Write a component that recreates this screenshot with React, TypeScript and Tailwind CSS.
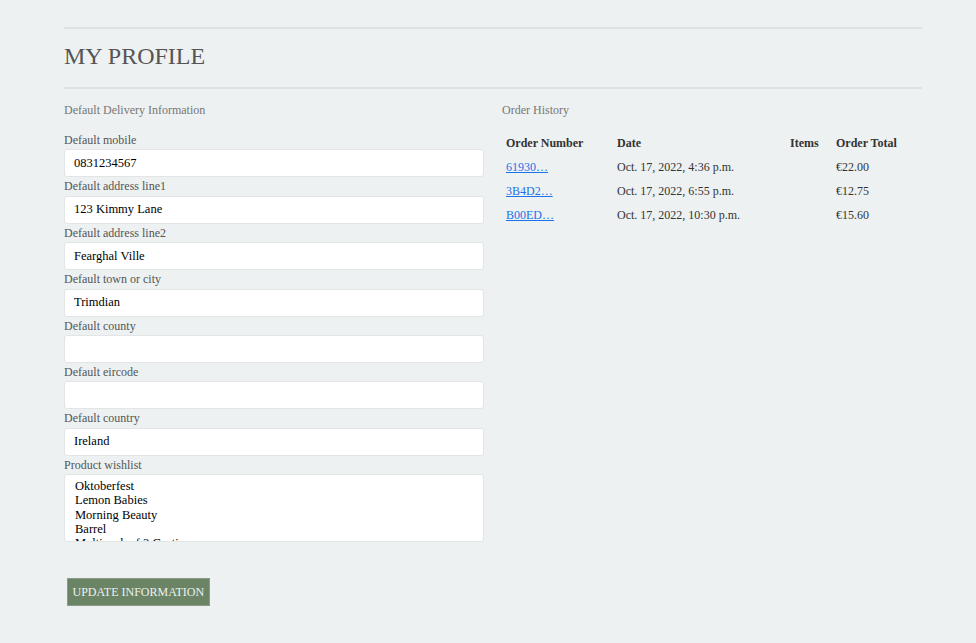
import React from 'react'

const fields = [
  { label: 'Default mobile', value: '0831234567' },
  { label: 'Default address line1', value: '123 Kimmy Lane' },
  { label: 'Default address line2', value: 'Fearghal Ville' },
  { label: 'Default town or city', value: 'Trimdian' },
  { label: 'Default county', value: '' },
  { label: 'Default eircode', value: '' },
  { label: 'Default country', value: 'Ireland' },
]

const wishlist = ['Oktoberfest', 'Lemon Babies', 'Morning Beauty', 'Barrel', 'Multipack of 3 Cacti']

const orders = [
  { number: '61930…', date: 'Oct. 17, 2022, 4:36 p.m.', total: '€22.00' },
  { number: '3B4D2…', date: 'Oct. 17, 2022, 6:55 p.m.', total: '€12.75' },
  { number: 'B00ED…', date: 'Oct. 17, 2022, 10:30 p.m.', total: '€15.60' },
]

const App = () => {
  return (
    <div className="min-h-[643px] bg-[#edf1f1] pl-[64px] pr-[54px] pt-[27px] font-['Liberation_Serif',serif] text-[#555]">
      <div className="border-t-2 border-[#dde2e2]">
        <h2 className="h-[58px] pt-[13px] text-[24px] leading-[28px] text-[#555]">MY PROFILE</h2>
      </div>
      <div className="flex border-t-2 border-[#dde2e2] pt-[12px]">
        <div className="w-[420px]">
          <p className="h-[18px] text-[12px] leading-[18px] text-[#777]">Default Delivery Information</p>
          <div className="mt-[12px] flex flex-col">
            {fields.map((f) => (
              <div key={f.label}>
                <label className="block h-[18.4px] text-[12px] leading-[18px] text-[#555]">{f.label}</label>
                <div className="flex h-[28px] items-center rounded-[3px] border border-[#e1e5e5] bg-white pl-[9px] text-[12.5px] text-black">
                  {f.value}
                </div>
              </div>
            ))}
            <label className="block h-[18.4px] text-[12px] leading-[18px] text-[#555]">Product wishlist</label>
            <div className="h-[68px] overflow-hidden rounded-[3px] border border-[#e1e5e5] bg-white pl-[10px] pt-[4px] text-[12.5px] leading-[14.3px] text-black">
              {wishlist.map((w) => (
                <div key={w}>{w}</div>
              ))}
            </div>
          </div>
          <button className="ml-[3px] mt-[36px] h-[28px] border border-[#8a9c86] bg-[#6b8466] px-[4.5px] text-[12px] text-[#eef1ee]">
            UPDATE INFORMATION
          </button>
        </div>
        <div className="ml-[18px] flex-1">
          <p className="h-[18px] text-[12px] leading-[18px] text-[#777]">Order History</p>
          <table className="mt-[12px] w-full text-left text-[12px] text-[#333]">
            <thead>
              <tr className="h-[24px] font-bold">
                <th className="w-[111px] px-[4px] font-bold">Order Number</th>
                <th className="w-[173px] px-[4px] font-bold">Date</th>
                <th className="w-[46px] px-[4px] font-bold">Items</th>
                <th className="px-[4px] font-bold">Order Total</th>
              </tr>
            </thead>
            <tbody>
              {orders.map((o) => (
                <tr key={o.number} className="h-[24px]">
                  <td className="px-[4px]">
                    <a href="#" className="text-[#1a73e8] underline">
                      {o.number}
                    </a>
                  </td>
                  <td className="px-[4px]">{o.date}</td>
                  <td className="px-[4px]"></td>
                  <td className="px-[4px]">{o.total}</td>
                </tr>
              ))}
            </tbody>
          </table>
        </div>
      </div>
    </div>
  )
}

export default App
